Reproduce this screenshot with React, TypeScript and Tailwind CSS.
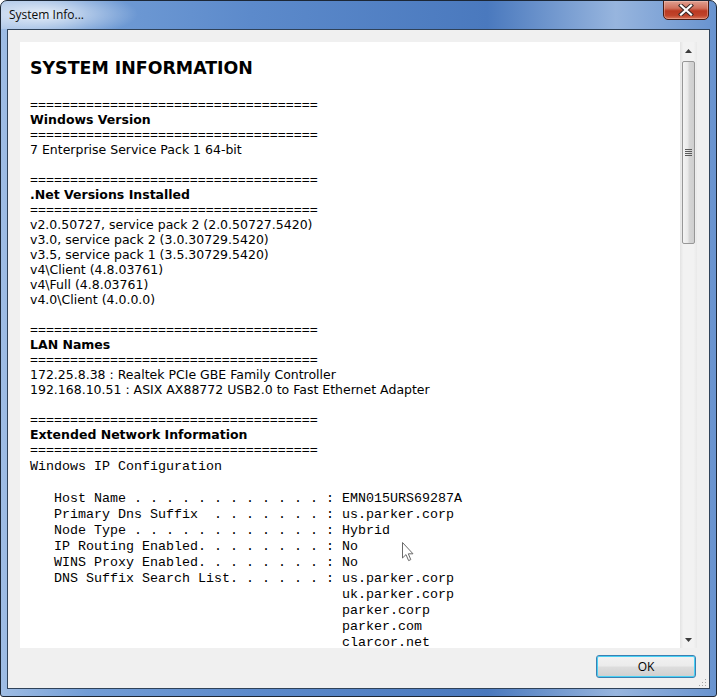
const EQ = '='.repeat(36)

type Line = { t: string; k: 'eq' | 'h' | 'n' | 'blank' }

const sections: { title: string; rows: string[] }[] = [
  { title: 'Windows Version', rows: ['7 Enterprise Service Pack 1 64-bit'] },
  {
    title: '.Net Versions Installed',
    rows: [
      'v2.0.50727, service pack 2 (2.0.50727.5420)',
      'v3.0, service pack 2 (3.0.30729.5420)',
      'v3.5, service pack 1 (3.5.30729.5420)',
      'v4\\Client (4.8.03761)',
      'v4\\Full (4.8.03761)',
      'v4.0\\Client (4.0.0.0)'
    ]
  },
  {
    title: 'LAN Names',
    rows: [
      '172.25.8.38 : Realtek PCIe GBE Family Controller',
      '192.168.10.51 : ASIX AX88772 USB2.0 to Fast Ethernet Adapter'
    ]
  }
]

const lines: Line[] = []
sections.forEach((s) => {
  lines.push({ t: EQ, k: 'eq' }, { t: s.title, k: 'h' }, { t: EQ, k: 'eq' })
  s.rows.forEach((r) => lines.push({ t: r, k: 'n' }))
  lines.push({ t: '', k: 'blank' })
})
lines.push(
  { t: EQ, k: 'eq' },
  { t: 'Extended Network Information', k: 'h' },
  { t: EQ, k: 'eq' }
)

const pad = ' '.repeat(39)
const ipconfig = [
  'Windows IP Configuration',
  '',
  `   Host Name${' .'.repeat(12)} : EMN015URS69287A`,
  `   Primary Dns Suffix  ${'. '.repeat(7)}: us.parker.corp`,
  `   Node Type${' .'.repeat(12)} : Hybrid`,
  `   IP Routing Enabled${'. '.repeat(8)}: No`,
  `   WINS Proxy Enabled${'. '.repeat(8)}: No`,
  `   DNS Suffix Search List${'. '.repeat(6)}: us.parker.corp`,
  pad + 'uk.parker.corp',
  pad + 'parker.corp',
  pad + 'parker.com',
  pad + 'clarcor.net'
].join('\n')

function CloseGlyph() {
  return (
    <svg width="16" height="12" viewBox="0 0 16 12">
      <path d="M3 1.5 L13 10.5 M13 1.5 L3 10.5" stroke="#3b2a28" strokeWidth="4.2" strokeLinecap="square" />
      <path d="M3 1.5 L13 10.5 M13 1.5 L3 10.5" stroke="#ffffff" strokeWidth="2.2" strokeLinecap="square" />
    </svg>
  )
}

function Scrollbar() {
  return (
    <div className="w-[17px] flex flex-col bg-[linear-gradient(90deg,#e3e3e3,#f2f2f2_20%,#f2f2f2_80%,#e9e9e9)]">
      <div className="h-[17px] flex items-center justify-center">
        <svg width="7" height="4" viewBox="0 0 7 4"><path d="M0 4 L3.5 0 L7 4 Z" fill="#3c3c3c" /></svg>
      </div>
      <div className="mx-[2px] mt-[2px] h-[183px] rounded-[2px] border border-[#979797] bg-[linear-gradient(90deg,#f4f4f4,#e8e8e8_45%,#d6d6d6_55%,#cfcfcf)] flex items-center justify-center">
        <div className="flex flex-col gap-[1px]">
          <div className="w-[7px] h-[1px] bg-[#5a5a5a]" />
          <div className="w-[7px] h-[1px] bg-[#5a5a5a]" />
          <div className="w-[7px] h-[1px] bg-[#5a5a5a]" />
          <div className="w-[7px] h-[1px] bg-[#5a5a5a]" />
        </div>
      </div>
      <div className="flex-1" />
      <div className="h-[17px] flex items-center justify-center">
        <svg width="7" height="4" viewBox="0 0 7 4"><path d="M0 0 L3.5 4 L7 0 Z" fill="#3c3c3c" /></svg>
      </div>
    </div>
  )
}

export default function App() {
  return (
    <div className="relative w-[717px] h-[697px] flex flex-col border border-[#1c2736] rounded-t-[7px] rounded-b-[3px] overflow-hidden px-[6px] pb-[7px] bg-[linear-gradient(90deg,#9fbde4_0%,#729dd6_12%,#5c8acb_35%,#4a79be_68%,#97b5de_86%,#6893cf_100%)] font-['Open_Sans',sans-serif]">
      <div className="h-[28px] flex items-start justify-between bg-[radial-gradient(ellipse_95px_24px_at_42px_13px,rgba(255,255,255,0.8),rgba(255,255,255,0))] -mx-[6px] pl-[8px] pr-[7px]">
        <div className="pt-[6px] text-[12px] leading-[16px] text-[#0b0b0b]">System Info...</div>
        <div className="w-[46px] h-[20px] -mt-[1px] rounded-b-[5px] border border-[#4a1b12] flex items-center justify-center bg-[linear-gradient(180deg,#e0a091_0%,#d1705c_40%,#bb3a22_55%,#c0432a_80%,#d9765a_100%)] shadow-[inset_0_0_0_1px_rgba(255,220,210,0.35)]">
          <CloseGlyph />
        </div>
      </div>
      <div className="relative flex-1 flex flex-col border border-[#2f4259] bg-[#f0f0f0] pt-[12px] pl-[12px] pr-[12px] pb-[10px]">
        <div className="h-[606px] flex bg-white">
          <div className="flex-1 overflow-hidden pl-[10px] text-black">
            <div className="pt-[14px] h-[38px] text-[17.4px] leading-[24px] font-bold font-['DejaVu_Sans',sans-serif]">
              SYSTEM INFORMATION
            </div>
            <div className="mt-[17px] font-['DejaVu_Sans',sans-serif] text-[12.5px]">
              {lines.map((l, i) =>
                l.k === 'eq' ? (
                  <div key={i} className="h-[15px] leading-[15px] font-['Liberation_Sans',sans-serif] text-[13.7px] whitespace-pre">
                    {l.t}
                  </div>
                ) : (
                  <div key={i} className={`h-[15px] leading-[15px] whitespace-pre ${l.k === 'h' ? 'font-bold' : ''}`}>
                    {l.t}
                  </div>
                )
              )}
            </div>
            <pre className="mt-[2px] font-['Liberation_Mono',monospace] text-[13.33px] leading-[16px] text-black">{ipconfig}</pre>
          </div>
          <Scrollbar />
        </div>
        <div className="mt-[7px] flex justify-end pr-[1px]">
          <div className="w-[100px] h-[23px] rounded-[3px] border border-[#3c7fb1] shadow-[inset_0_0_0_1px_#48d1f5] bg-[linear-gradient(180deg,#f2f2f2_0%,#ebebeb_48%,#dddddd_52%,#cfcfcf_100%)] flex items-center justify-center text-[12px] text-black">
            OK
          </div>
        </div>
        <svg className="absolute right-[2px] bottom-[1px]" width="9" height="9" viewBox="0 0 9 9">
          <rect x="7" y="1" width="1" height="1" fill="#a6a6a6" />
          <rect x="4" y="4" width="1" height="1" fill="#a6a6a6" />
          <rect x="7" y="4" width="1" height="1" fill="#a6a6a6" />
          <rect x="1" y="7" width="1" height="1" fill="#a6a6a6" />
          <rect x="4" y="7" width="1" height="1" fill="#a6a6a6" />
          <rect x="7" y="7" width="1" height="1" fill="#a6a6a6" />
        </svg>
      </div>
      <svg className="absolute left-[401px] top-[541px]" width="12" height="20" viewBox="0 0 12 20">
        <path d="M0.5 0.5 L0.5 16 L4 12.6 L6.6 18.6 L8.8 17.6 L6.3 11.8 L11 11.8 Z" fill="#ffffff" stroke="#6a6a6a" strokeWidth="1" />
      </svg>
    </div>
  )
}
